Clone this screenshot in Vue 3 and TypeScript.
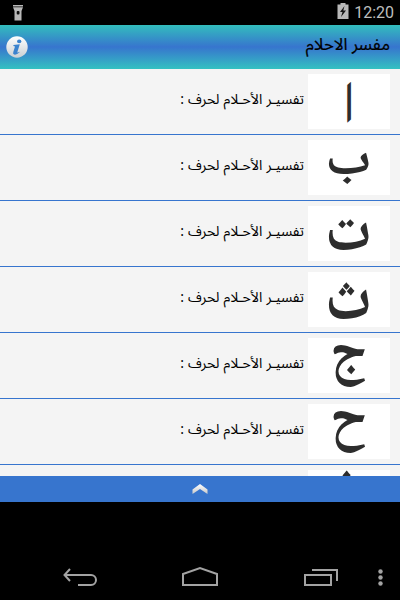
<script setup lang="ts">
interface LetterRow {
  letter: string
  fit: string
  plain?: boolean
}

// Each glyph is laid out at 100 units and fitted into its 82x55 tile.
const rows: LetterRow[] = [
  { letter: 'ا', fit: 'matrix(0.4 -0.36 0 0.5 35.4 52.2)', plain: true },
  { letter: 'ب', fit: 'translate(16.800 33.500) scale(0.597 0.48)' },
  { letter: 'ت', fit: 'translate(16.800 43.500) scale(0.597 0.62)' },
  { letter: 'ث', fit: 'translate(16.800 46.500) scale(0.597 0.66)' },
  { letter: 'ج', fit: 'translate(21.800 31.500) scale(0.56 0.6)' },
  { letter: 'ح', fit: 'translate(21.800 31.500) scale(0.56 0.6)' },
  { letter: 'خ', fit: 'translate(19.800 38) scale(0.56 0.6)' },
]
</script>

<template>
  <div class="screen">
    <div class="status">
      <svg class="torch" width="12" height="18" viewBox="0 0 12 18">
        <path d="M1 1h10v1.500H1zM1 3.300h10L9.500 7v9.500h-7V7z" fill="#b9b9b9" />
        <rect x="4.700" y="7" width="2.800" height="3.500" rx="1" fill="#111" />
      </svg>
      <svg class="battery" width="12" height="16" viewBox="0 0 12 16">
        <path d="M0.500 1.500h3V0h5v1.500h3V16H0.500z" fill="#b8b8b8" />
        <path d="M7.500 3L3 9h2.500L4 14l5-6.500H6.300z" fill="#151515" />
      </svg>
      <span class="clock">12:20</span>
    </div>

    <header class="header">
      <svg width="22" height="22" viewBox="0 0 22 22">
        <defs>
          <linearGradient id="disc" x1="0" y1="0" x2="0" y2="1">
            <stop offset="0" stop-color="#fff" />
            <stop offset="1" stop-color="#c9cfd3" />
          </linearGradient>
        </defs>
        <circle cx="11" cy="11" r="10.700" fill="url(#disc)" />
        <ellipse cx="13.200" cy="5.400" rx="2.200" ry="1.800" fill="#3b83ce" />
        <path d="M7.500 9L13.800 8.200 11.300 16.300Q11.200 17.100 13.200 15.700L13.600 16.300Q10.500 19.300 8.100 18.600Q6.600 17.900 7.300 15.900L9 10.400L7.300 10.100Z" fill="#3b83ce" />
      </svg>
      <h1 class="title" dir="rtl">مفسر الاحلام</h1>
    </header>

    <main class="list" dir="rtl">
      <div v-for="row in rows" :key="row.letter" class="row">
        <svg class="tile" :class="{ plain: row.plain }" width="82" height="55" viewBox="0 0 82 55" direction="ltr">
          <text :transform="row.fit" font-size="100">{{ row.letter }}</text>
        </svg>
        <span class="label">تفسيـر الأحـلام لحرف :</span>
      </div>
    </main>

    <div class="drawer">
      <svg width="16" height="10" viewBox="0 0 16 10">
        <defs>
          <linearGradient id="chev" x1="0" y1="0" x2="0" y2="1">
            <stop offset="0" stop-color="#fff" />
            <stop offset="1" stop-color="#c8c8c8" />
          </linearGradient>
        </defs>
        <path d="M0.500 5.500L8 0L15.500 5.500V10L8 5L0.500 10Z" fill="url(#chev)" />
      </svg>
    </div>

    <div class="gap"></div>

    <nav class="nav">
      <svg width="400" height="46" viewBox="0 0 400 46" fill="none" stroke="#a3a3a3" stroke-width="2">
        <path d="M65 21H91A5 5 0 0 1 91 31H78M70 15L64.500 21L70 27" />
        <path d="M183 31V20L200 14L217 20V31Z" />
        <path d="M305 21H331V31H305ZM312 16H337V27" />
        <g fill="#a3a3a3" stroke="none">
          <circle cx="380.500" cy="17.500" r="2.200" />
          <circle cx="380.500" cy="23.500" r="2.200" />
          <circle cx="380.500" cy="29.500" r="2.200" />
        </g>
      </svg>
    </nav>
  </div>
</template>

<style>
body {
  margin: 0;
  background: #000;
}
</style>

<style scoped>
.screen {
  width: 400px;
  height: 600px;
  display: flex;
  flex-direction: column;
  overflow: hidden;
  background: #000;
  font-family: "Noto Sans", "Noto Sans Arabic", sans-serif;
}
.status {
  height: 25px;
  box-sizing: border-box;
  display: flex;
  align-items: center;
  padding: 0 6px 0 12px;
}
.torch {
  margin-top: 1px;
}
.battery {
  margin-left: auto;
  margin-top: -3px;
}
.clock {
  margin-left: 5px;
  font: 16px/25px Roboto, sans-serif;
  color: #bebebe;
}
.header {
  height: 44px;
  box-sizing: border-box;
  display: flex;
  align-items: center;
  justify-content: space-between;
  padding: 0 10px 0 6px;
  background: linear-gradient(#33bdbd, #3775ce 50%, #33c1c1);
}
.title {
  margin: 0;
  font-size: 16.800px;
  line-height: 34px;
  padding-bottom: 6px;
  font-weight: 400;
  color: #000;
  -webkit-text-stroke: 0.2px #000;
}
.list {
  height: 407px;
  overflow: hidden;
  background: #f4f4f4;
}
.row {
  height: 66px;
  box-sizing: border-box;
  display: flex;
  align-items: flex-start;
  padding: 5px 10px 0 0;
  border-bottom: 1px solid #3775ce;
}
.tile {
  flex: none;
  background: #fff;
  fill: #2d2d2d;
  font-family: "Noto Naskh Arabic", serif;
  font-weight: 700;
}
.tile.plain {
  font-family: "DejaVu Sans", sans-serif;
  font-weight: 400;
}
.label {
  margin-right: 4px;
  font-size: 14px;
  line-height: 50px;
  word-spacing: 0.500px;
  white-space: nowrap;
  color: #000;
}
.drawer {
  height: 26px;
  display: flex;
  align-items: center;
  justify-content: center;
  background: #3775ce;
}
.gap {
  height: 52px;
}
.nav {
  height: 46px;
}
</style>
